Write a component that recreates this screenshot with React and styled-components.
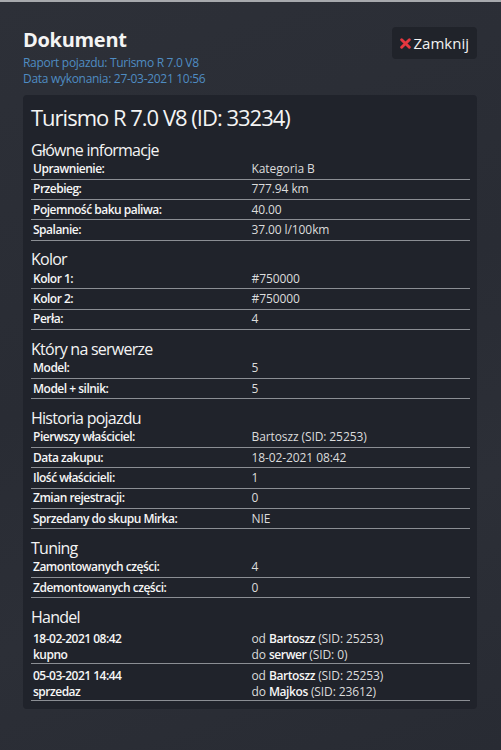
import React from "react";
import styled, { createGlobalStyle } from "styled-components";

const GlobalStyle = createGlobalStyle`
  html, body {
    margin: 0;
    padding: 0;
    background: #2a2d35;
  }
  body {
    font-family: "Open Sans", "Liberation Sans", sans-serif;
    color: #f2f2f2;
    border-top: 2px solid #a7a9ad;
    min-height: 748px;
    background: linear-gradient(160deg, #2d3038 0%, #292c34 45%, #2c2f37 70%, #282b33 100%);
  }
`;

const Page = styled.div`
  padding: 25px 24px 40px 23px;
`;

const Header = styled.div`
  display: flex;
  justify-content: space-between;
  align-items: flex-start;
`;

const Title = styled.h1`
  margin: 0;
  font-size: 20px;
  line-height: 26px;
  font-weight: 700;
  letter-spacing: -0.3px;
  color: #f4f4f4;
`;

const Sub = styled.div`
  margin-top: 2px;
  font-size: 12px;
  line-height: 16px;
  color: #4f8cc2;
  letter-spacing: -0.3px;
`;

const CloseButton = styled.button`
  display: flex;
  align-items: center;
  gap: 3px;
  height: 32px;
  padding: 0 8px;
  border: 0;
  border-radius: 4px;
  background: #20232a;
  color: #f2f2f2;
  font-family: inherit;
  font-size: 15px;
  cursor: pointer;
`;

const Card = styled.div`
  margin-top: 8px;
  background: #20232b;
  border-radius: 4px;
  padding: 9px 7px 8px 8px;
`;

const CardTitle = styled.h2`
  margin: 0;
  font-size: 22px;
  line-height: 27px;
  font-weight: 400;
  letter-spacing: -1px;
  color: #f4f4f4;
`;

const SectionTitle = styled.h3`
  margin: 8.5px 0 0;
  font-size: 16px;
  line-height: 20px;
  font-weight: 400;
  letter-spacing: -0.75px;
  color: #f4f4f4;
`;

const Row = styled.div`
  display: grid;
  grid-template-columns: 50% 50%;
  align-items: center;
  min-height: ${p => (p.tall ? "auto" : "19.3px")};
  padding: ${p => (p.tall ? "4px 0 0" : "0")};
  border-bottom: 1px solid #8b8e94;
  font-size: 12px;
  line-height: 16px;
`;

const Label = styled.div`
  padding-left: 2px;
  font-weight: 600;
  letter-spacing: -0.5px;
  color: #f6f6f6;
`;

const Value = styled.div`
  padding-left: 1px;
  color: #dcdcdc;
  letter-spacing: -0.1px;

  b {
    font-weight: 600;
    letter-spacing: -0.4px;
    color: #f6f6f6;
  }
`;

const XIcon = () => (
  <svg width="11" height="11" viewBox="0 0 10 10">
    <path d="M1.5 1.5 L8.5 8.5 M8.5 1.5 L1.5 8.5" stroke="#e5373f" strokeWidth="2.6" strokeLinecap="round" />
  </svg>
);

const sections = [
  {
    title: "Główne informacje",
    rows: [
      ["Uprawnienie:", "Kategoria B"],
      ["Przebieg:", "777.94 km"],
      ["Pojemność baku paliwa:", "40.00"],
      ["Spalanie:", "37.00 l/100km"]
    ]
  },
  {
    title: "Kolor",
    rows: [
      ["Kolor 1:", "#750000"],
      ["Kolor 2:", "#750000"],
      ["Perła:", "4"]
    ]
  },
  {
    title: "Który na serwerze",
    rows: [
      ["Model:", "5"],
      ["Model + silnik:", "5"]
    ]
  },
  {
    title: "Historia pojazdu",
    rows: [
      ["Pierwszy właściciel:", "Bartoszz (SID: 25253)"],
      ["Data zakupu:", "18-02-2021 08:42"],
      ["Ilość właścicieli:", "1"],
      ["Zmian rejestracji:", "0"],
      ["Sprzedany do skupu Mirka:", "NIE"]
    ]
  },
  {
    title: "Tuning",
    rows: [
      ["Zamontowanych części:", "4"],
      ["Zdemontowanych części:", "0"]
    ]
  }
];

const trades = [
  {
    date: "18-02-2021 08:42",
    type: "kupno",
    from: ["Bartoszz", "25253"],
    to: ["serwer", "0"]
  },
  {
    date: "05-03-2021 14:44",
    type: "sprzedaz",
    from: ["Bartoszz", "25253"],
    to: ["Majkos", "23612"]
  }
];

export default function App() {
  return (
    <>
      <GlobalStyle />
      <Page>
        <Header>
          <div>
            <Title>Dokument</Title>
            <Sub>
              Raport pojazdu: Turismo R 7.0 V8
              <br />
              Data wykonania: 27-03-2021 10:56
            </Sub>
          </div>
          <CloseButton>
            <XIcon />
            Zamknij
          </CloseButton>
        </Header>

        <Card>
          <CardTitle>Turismo R 7.0 V8 (ID: 33234)</CardTitle>
          {sections.map(s => (
            <div key={s.title}>
              <SectionTitle>{s.title}</SectionTitle>
              {s.rows.map(([l, v]) => (
                <Row key={l}>
                  <Label>{l}</Label>
                  <Value>{v}</Value>
                </Row>
              ))}
            </div>
          ))}
          <SectionTitle>Handel</SectionTitle>
          {trades.map(t => (
            <Row tall key={t.date}>
              <Label>
                {t.date}
                <br />
                {t.type}
              </Label>
              <Value>
                od <b>{t.from[0]}</b> (SID: {t.from[1]})
                <br />
                do <b>{t.to[0]}</b> (SID: {t.to[1]})
              </Value>
            </Row>
          ))}
        </Card>
      </Page>
    </>
  );
}
